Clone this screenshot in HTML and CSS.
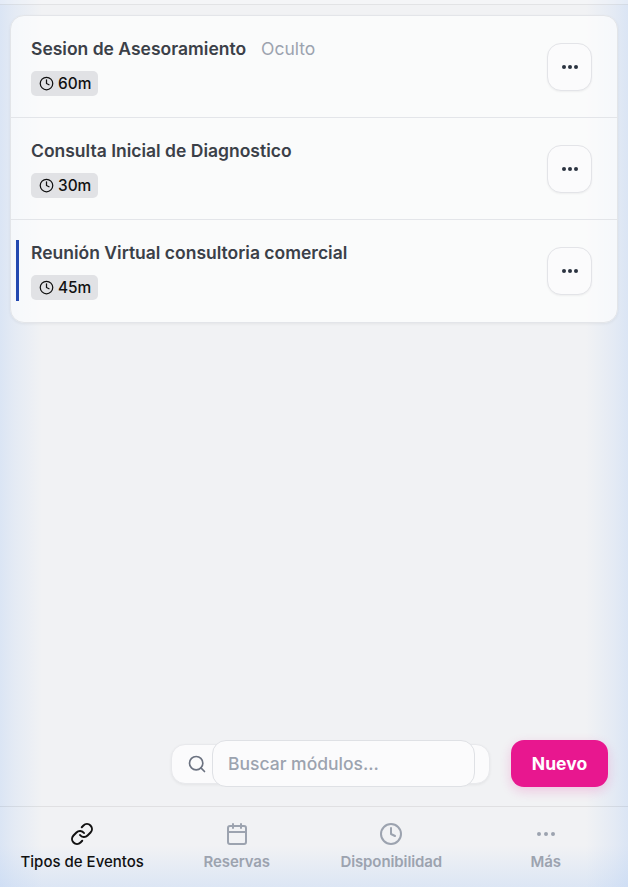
FILE: index.html
```html
<!DOCTYPE html>
<html lang="es">
<head>
  <meta charset="UTF-8" />
  <meta name="viewport" content="width=device-width, initial-scale=1.0" />
  <title>Tipos de Eventos</title>
  <link rel="stylesheet" href="styles.css">
</head>
<body>
  <div class="page">
    <div class="topbar"></div>

    <main class="content">
      <section class="event-list">
        <div class="event-row">
          <div class="event-info">
            <div class="event-head">
              <span class="event-title">Sesion de Asesoramiento</span>
              <span class="event-hidden">Oculto</span>
            </div>
            <span class="duration">
              <svg class="duration-icon" viewBox="0 0 24 24"><circle cx="12" cy="12" r="10"/><path d="M12 6v6l4 2"/></svg>
              60m
            </span>
          </div>
          <button class="more-btn" aria-label="Opciones"><span></span><span></span><span></span></button>
        </div>
        <div class="event-row">
          <div class="event-info">
            <div class="event-head">
              <span class="event-title">Consulta Inicial de Diagnostico</span>
            </div>
            <span class="duration">
              <svg class="duration-icon" viewBox="0 0 24 24"><circle cx="12" cy="12" r="10"/><path d="M12 6v6l4 2"/></svg>
              30m
            </span>
          </div>
          <button class="more-btn" aria-label="Opciones"><span></span><span></span><span></span></button>
        </div>
        <div class="event-row event-row-active">
          <div class="event-info">
            <div class="event-head">
              <span class="event-title">Reunión Virtual consultoria comercial</span>
            </div>
            <span class="duration">
              <svg class="duration-icon" viewBox="0 0 24 24"><circle cx="12" cy="12" r="10"/><path d="M12 6v6l4 2"/></svg>
              45m
            </span>
          </div>
          <button class="more-btn" aria-label="Opciones"><span></span><span></span><span></span></button>
        </div>
      </section>

      <div class="toolbar">
        <div class="search">
          <svg class="search-icon" viewBox="0 0 24 24"><circle cx="11" cy="11" r="8"/><path d="M21 21l-4.3-4.3"/></svg>
          <input class="search-input" type="text" placeholder="Buscar módulos..." />
        </div>
        <button class="new-btn">Nuevo</button>
      </div>
    </main>

    <nav class="bottom-nav">
      <a class="nav-item nav-item-active">
        <svg class="nav-icon" viewBox="0 0 24 24"><path d="M10 13a5 5 0 0 0 7.54.54l3-3a5 5 0 0 0-7.07-7.07l-1.72 1.71"/><path d="M14 11a5 5 0 0 0-7.54-.54l-3 3a5 5 0 0 0 7.07 7.07l1.71-1.71"/></svg>
        Tipos de Eventos
      </a>
      <a class="nav-item">
        <svg class="nav-icon" viewBox="0 0 24 24"><rect x="3" y="4" width="18" height="18" rx="2"/><path d="M16 2v4M8 2v4M3 10h18"/></svg>
        Reservas
      </a>
      <a class="nav-item">
        <svg class="nav-icon" viewBox="0 0 24 24"><circle cx="12" cy="12" r="10"/><path d="M12 6v6l4 2"/></svg>
        Disponibilidad
      </a>
      <a class="nav-item">
        <svg class="nav-icon" viewBox="0 0 24 24"><circle class="dot" cx="5" cy="12" r="1"/><circle class="dot" cx="12" cy="12" r="1"/><circle class="dot" cx="19" cy="12" r="1"/></svg>
        Más
      </a>
    </nav>
  </div>
</body>
</html>
```

FILE: styles.css
```css
* {
  box-sizing: border-box;
}
body {
  margin: 0;
  font-family: Inter, "Liberation Sans", sans-serif;
  background-color: #f1f2f4;
  color: #374151;
}
.page {
  display: flex;
  flex-direction: column;
  height: 887px;
  overflow: hidden;
  background:
    linear-gradient(to right, rgba(190, 212, 245, 0.44), rgba(190, 212, 245, 0.26) 14px, rgba(190, 212, 245, 0) 42px),
    linear-gradient(to left, rgba(190, 212, 245, 0.44), rgba(190, 212, 245, 0.26) 14px, rgba(190, 212, 245, 0) 42px),
    linear-gradient(to top, rgba(190, 212, 245, 0.4), rgba(190, 212, 245, 0) 42px);
}
.topbar {
  height: 5px;
  border-bottom: 1px solid rgba(0, 0, 0, 0.07);
  background-color: rgba(255, 255, 255, 0.25);
}
.content {
  flex: 1;
  display: flex;
  flex-direction: column;
  padding: 10px 10px 19px 10px;
}
.event-list {
  background-color: rgba(255, 255, 255, 0.66);
  border: 1px solid #e3e5e9;
  border-radius: 14px;
  box-shadow: 0 1px 3px rgba(0, 0, 0, 0.06);
}
.event-row {
  position: relative;
  display: flex;
  align-items: center;
  justify-content: space-between;
  height: 102px;
  padding: 0 25px 0 20px;
  border-bottom: 1px solid #e3e5e9;
}
.event-row:last-child {
  border-bottom: none;
}
.event-row-active::before {
  content: "";
  position: absolute;
  left: 5px;
  top: 20px;
  bottom: 21px;
  width: 3px;
  background-color: #2348b0;
}
.event-info {
  align-self: flex-start;
  display: flex;
  flex-direction: column;
  align-items: flex-start;
  gap: 11px;
  padding-top: 20px;
}
.event-head {
  display: flex;
  align-items: center;
  gap: 15px;
  height: 24px;
}
.event-title {
  font-size: 17.5px;
  font-weight: 600;
  color: #3b4048;
}
.event-hidden {
  font-size: 17.5px;
  color: #9ca3af;
}
.duration {
  display: flex;
  align-items: center;
  gap: 4px;
  height: 25px;
  padding: 0 7px 0 8px;
  border-radius: 5px;
  background-color: #e1e2e5;
  font-size: 15.4px;
  font-weight: 450;
  color: #111;
}
.duration-icon {
  width: 15px;
  height: 15px;
  fill: none;
  stroke: #111;
  stroke-width: 2;
  stroke-linecap: round;
  stroke-linejoin: round;
}
.more-btn {
  display: flex;
  align-items: center;
  justify-content: center;
  gap: 2px;
  width: 45px;
  height: 48px;
  padding: 0;
  background-color: #fbfbfc;
  border: 1px solid #e3e4e8;
  border-radius: 14px;
  box-shadow: 0 1px 2px rgba(0, 0, 0, 0.05);
}
.more-btn span {
  width: 4px;
  height: 4px;
  border-radius: 50%;
  background-color: #2b3340;
}
.toolbar {
  margin-top: auto;
  display: flex;
  align-items: center;
  justify-content: flex-end;
  gap: 21px;
  padding-right: 10px;
}
.search {
  display: flex;
  align-items: center;
  width: 319px;
  height: 40px;
  padding-left: 15px;
  background-color: #fbfbfc;
  border: 1px solid #e8e9ec;
  border-radius: 14px;
  box-shadow: 0 1px 3px rgba(0, 0, 0, 0.06);
}
.search-icon {
  flex: none;
  width: 20px;
  height: 20px;
  fill: none;
  stroke: #6b7280;
  stroke-width: 2;
  stroke-linecap: round;
  stroke-linejoin: round;
}
.search-input {
  width: 263px;
  height: 47px;
  margin-left: 5px;
  padding: 0 15px;
  background-color: #fbfbfc;
  border: 1px solid #dfe1e5;
  border-radius: 14px;
  font-family: inherit;
  font-size: 17.5px;
  font-weight: 500;
  color: #374151;
}
.search-input::placeholder {
  color: #9ca3af;
  opacity: 1;
}
.new-btn {
  width: 97px;
  height: 47px;
  padding: 0;
  border: none;
  border-radius: 13px;
  background-color: #e8178f;
  box-shadow: 0 4px 12px rgba(232, 23, 143, 0.2);
  color: #fff;
  font-family: inherit;
  font-size: 17.5px;
  font-weight: 700;
}
.bottom-nav {
  display: grid;
  grid-template-columns: repeat(4, 1fr);
  height: 81px;
  padding: 15px 5px 0 5px;
  border-top: 1px solid rgba(0, 0, 0, 0.07);
}
.nav-item {
  display: flex;
  flex-direction: column;
  align-items: center;
  gap: 7px;
  font-size: 15px;
  line-height: 18px;
  letter-spacing: -0.1px;
  font-weight: 600;
  color: #9ca3af;
}
.nav-item-active {
  letter-spacing: 0;
  color: #111;
  font-weight: 500;
}
.nav-icon {
  width: 24px;
  height: 24px;
  fill: none;
  stroke: currentColor;
  stroke-width: 2;
  stroke-linecap: round;
  stroke-linejoin: round;
}
.nav-icon .dot {
  fill: currentColor;
}
```
